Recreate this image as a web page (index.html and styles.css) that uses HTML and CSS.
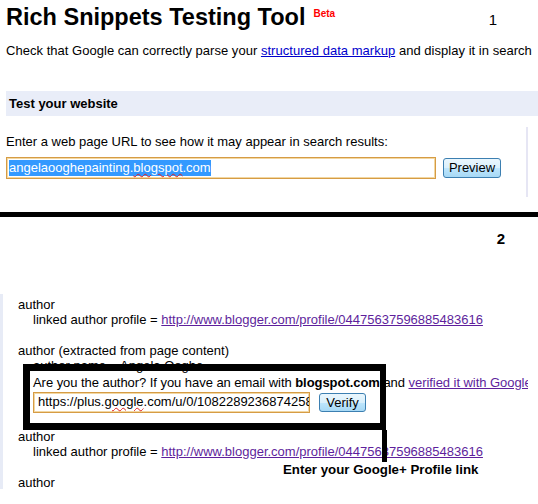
FILE: index.html
```html
<!DOCTYPE html>
<html>
<head>
<meta charset="utf-8">
<link rel="stylesheet" href="styles.css">
</head>
<body>
<div class="page">
  <section class="top">
    <div class="titlerow">
      <h1 class="title">Rich Snippets Testing Tool</h1>
      <span class="beta">Beta</span>
      <span class="num num1">1</span>
    </div>
    <p class="desc">Check that Google can correctly parse your <a href="#" class="link">structured data markup</a> and display it in search</p>
    <div class="panelhead">Test your website</div>
    <div class="panelbody">
      <div class="panelmain">
        <p class="prompt">Enter a web page URL to see how it may appear in search results:</p>
        <div class="urlrow">
          <div class="field urlfield"><span class="sel">angelaooghepainting.<span class="spell">blogspot</span>.com</span></div>
          <button class="btn preview">Preview</button>
        </div>
      </div>
      <div class="vline"></div>
    </div>
  </section>
  <div class="divider"></div>
  <section class="bottom">
    <div class="num num2">2</div>
    <div class="results">
      <div class="item">
        <div class="key">author</div>
        <div class="prop">linked author profile = <a href="#" class="vlink">http://www.blogger.com/profile/04475637596885483616</a></div>
      </div>
      <div class="item">
        <div class="key">author (extracted from page content)</div>
        <div class="prop">author name = Angela Ooghe</div>
        <div class="prop ask">Are you the author? If you have an email with <b>blogspot.com</b> and <a href="#" class="vlink">verified it with Google</a></div>
        <div class="verifyrow">
          <div class="field plusfield">https://plus.<span class="spell">google</span>.com/u/0/108228923687425812345</div>
          <button class="btn verify">Verify</button>
        </div>
      </div>
      <div class="item">
        <div class="key">author</div>
        <div class="prop">linked author profile = <a href="#" class="vlink">http://www.blogger.com/profile/04475637596885483616</a></div>
      </div>
      <div class="item last">
        <div class="key">author</div>
      </div>
    </div>
    <div class="callout"></div>
    <div class="pointer"></div>
    <div class="calloutlabel">Enter your Google+ Profile link</div>
  </section>
</div>
</body>
</html>
```
FILE: styles.css
```css
html, body {
  margin: 0;
  padding: 0;
  background: #fff;
}
body {
  font-family: "Liberation Sans", Arial, sans-serif;
  font-size: 13px;
  color: #000;
}
.page {
  width: 538px;
  height: 504px;
  overflow: hidden;
  position: relative;
}
.top {
  padding-left: 6px;
}
.titlerow {
  display: flex;
  align-items: flex-start;
  height: 40px;
}
.title {
  margin: 0;
  padding-top: 4px;
  font-size: 23.5px;
  line-height: 26px;
  font-weight: bold;
  white-space: nowrap;
}
.beta {
  color: #f00;
  font-size: 10px;
  font-weight: bold;
  margin-left: 8px;
  margin-top: 8px;
  line-height: 12px;
}
.num {
  font-size: 15px;
  line-height: 18px;
}
.num1 {
  margin-left: auto;
  margin-right: 41px;
  margin-top: 11px;
}
.desc {
  margin: 3px 0 0 0;
  line-height: 15px;
  white-space: nowrap;
  letter-spacing: 0.03px;
}
.link {
  color: #0000cc;
}
.vlink {
  color: #5e1f9c;
}
.panelhead {
  margin-top: 33px;
  height: 25px;
  line-height: 25px;
  background: #e9edf8;
  font-weight: bold;
  padding-left: 3px;
}
.panelbody {
  display: flex;
  justify-content: space-between;
  align-items: flex-start;
}
.panelmain {
  padding-top: 18px;
}
.prompt {
  margin: 0;
  line-height: 15px;
  white-space: nowrap;
}
.urlrow {
  display: flex;
  align-items: center;
  gap: 7px;
  margin-top: 8px;
}
.field {
  box-sizing: border-box;
  border: 1px solid #d69c45;
  box-shadow: inset 0 0 0 1px #f2d7a2;
  background: #fff;
  white-space: nowrap;
  overflow: hidden;
  line-height: 16px;
}
.urlfield {
  width: 430px;
  height: 22px;
  padding: 2px 2px;
}
.sel {
  background: #3399ff;
  color: #fff;
  display: inline-block;
  line-height: 16px;
}
.spell {
  text-decoration: underline wavy #e02020;
  text-decoration-thickness: 1px;
  text-underline-offset: 1px;
}
.btn {
  font-family: "Liberation Sans", Arial, sans-serif;
  font-size: 13px;
  color: #000;
  border: 1px solid #3c7fb1;
  border-radius: 3px;
  background: linear-gradient(#eaf6fd 0%, #d9f0fc 50%, #bee6fd 51%, #a7d9f5 100%);
  padding: 0;
  height: 20px;
  line-height: 18px;
}
.preview {
  width: 58px;
}
.vline {
  width: 2px;
  height: 70px;
  background: #e6e6f4;
  margin-right: 10px;
  margin-top: 11px;
}
.divider {
  height: 5px;
  background: #000;
  margin-top: 15px;
}
.bottom {
  position: relative;
  height: 287px;
}
.num2 {
  font-weight: bold;
  text-align: right;
  padding-right: 33px;
  padding-top: 13px;
}
.results {
  margin-top: 46px;
  border-left: 3px solid #e7ebf6;
  padding-left: 15px;
  padding-top: 3px;
  width: 510px;
  height: 192px;
  overflow: hidden;
  white-space: nowrap;
  line-height: 15px;
}
.item {
  margin-bottom: 16px;
}
.item.last {
  margin-bottom: 0;
}
.prop {
  padding-left: 15px;
}
.ask {
  margin-top: 2px;
  letter-spacing: -0.05px;
}
.verifyrow {
  display: flex;
  align-items: center;
  gap: 9px;
  padding-left: 15px;
  margin-top: 2px;
}
.plusfield {
  width: 277px;
  height: 21px;
  padding: 1px 4px;
}
.verify {
  width: 47px;
  height: 19px;
}
.callout {
  position: absolute;
  left: 23px;
  top: 147px;
  width: 363px;
  height: 66px;
  box-sizing: border-box;
  border: 7px solid #000;
  border-right-width: 6px;
}
.pointer {
  position: absolute;
  left: 382px;
  top: 213px;
  width: 5px;
  height: 32px;
  background: #000;
}
.calloutlabel {
  position: absolute;
  left: 283px;
  top: 245px;
  font-size: 13.3px;
  font-weight: bold;
  line-height: 16px;
  white-space: nowrap;
}
```
